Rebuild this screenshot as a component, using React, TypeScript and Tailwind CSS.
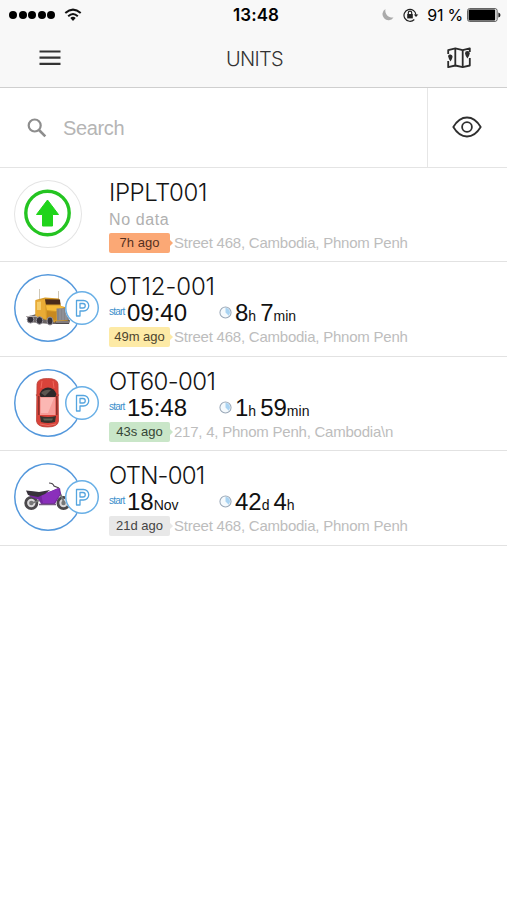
import * as React from 'react';
import clsx from 'clsx';

type Stat = { value: string; unit: string };

type Unit = {
  name: string;
  nameClass: string;
  icon: React.ReactNode;
  parked?: boolean;
  start?: Stat;
  duration?: Stat[];
  ago: string;
  badge: string;
  arrow: string;
  address: string;
};

function ArrowIcon() {
  return (
    <svg viewBox="0 0 68 68" className="h-full w-full">
      <circle cx="33.5" cy="33" r="21.7" fill="#fff" stroke="#24c421" strokeWidth="3.4" />
      <path d="M33.5 20 44.5 34.5H38.5V46H28.5V34.5H22.5Z" fill="#20d41b" stroke="#20d41b" strokeLinejoin="round" />
    </svg>
  );
}

function TruckIcon() {
  return (
    <svg viewBox="0 0 68 68" className="h-full w-full">
      <path d="M13 43 22 40 34 43 56 46 53 50 36 50 14 48Z" fill="#6a6465" />
      <path d="M25.5 15V26M44.5 17V25" stroke="#cfc8b8" strokeWidth="1" />
      <path d="M21.5 26 31 23.5 45 24.5 47 32 55 34 54 47 43 49 21.5 43Z" fill="#d69a28" />
      <path d="M21.5 26.5 31 25 32 45 21.5 42Z" fill="#e9ab35" />
      <path d="M23 28 27 27.5V36L23 36Z" fill="#f6cd6a" />
      <path d="M31 25.2 46 25.5 46.5 30.5 32 30.5Z" fill="#4b2c1a" />
      <path d="M32 31.5 46 31.5 50 34 42 37 33 36Z" fill="#f8bd3a" />
      <path d="M33 37 42 38V46L33 45Z" fill="#c88920" />
      <path d="M42.5 34.5 54.5 34 55 46 43 46.5Z" fill="#85858a" />
      <path d="M46 35V46M49 35V46M52 35V46" stroke="#a0a0a4" strokeWidth=".8" />
      <g fill="#343139" stroke="#96929a" strokeWidth="1">
        <ellipse cx="16.5" cy="45.5" rx="3.3" ry="3.6" />
        <ellipse cx="25.5" cy="46.5" rx="3.3" ry="3.8" />
        <ellipse cx="36" cy="47" rx="3" ry="4" />
      </g>
      <path d="M41 47.5 56 46.5 55 50 42 50Z" fill="#4e494c" />
      <path d="M12 42.5H23M42 48H55" stroke="#b5afb0" strokeWidth="1.2" />
    </svg>
  );
}

function CarIcon() {
  return (
    <svg viewBox="0 0 68 68" className="h-full w-full">
      <path d="M22 26.5 25 25M45 26.5 42 25" stroke="#b56c64" strokeWidth="1.6" />
      <path d="M23 15Q23.5 9.5 33.5 9.5T44 15L44.5 52Q44 58 33.5 58T22.5 52Z" fill="#d9433a" stroke="#b94239" strokeWidth=".8" />
      <path d="M28 12 27 19M39 12 40 19" stroke="#f0675b" strokeWidth="1" />
      <path d="M25.5 25Q28 18.5 34 18.5T42.5 25L41 29H27Z" fill="#2d2829" />
      <path d="M27 24Q31 20 37 21L31 27Z" fill="#5b5650" />
      <path d="M24.8 27V46M42.8 27V46" stroke="#7a2c29" strokeWidth="1.2" />
      <path d="M26 28H41.5V46H26Z" fill="#f69c98" />
      <path d="M27 29H40L34 44H27Z" fill="#fbb7b3" />
      <path d="M26 47Q34 49 42 47L41 53Q34 55 27 53Z" fill="#37322d" />
      <path d="M29 49.5H39L38 51.5H30Z" fill="#5f6354" />
      <path d="M26 55Q34 58 42 55" stroke="#e97167" fill="none" />
    </svg>
  );
}

function MotorbikeIcon() {
  return (
    <svg viewBox="0 0 68 68" className="h-full w-full">
      <g fill="#dad8da" stroke="#4b484b" strokeWidth="2.8">
        <circle cx="17.3" cy="40" r="5.6" />
        <circle cx="49.5" cy="40" r="5.6" />
      </g>
      <g fill="#777">
        <circle cx="17.3" cy="40" r="2.2" />
        <circle cx="49.5" cy="40" r="2.2" />
      </g>
      <path d="M44 26 50 39M18 40 30 36" stroke="#777" strokeWidth="1.8" />
      <path d="M14 31 27 32 42 26 46 25 47 31 41 41 27 41 25 37 17 34Z" fill="#7527a0" />
      <path d="M27 31 38 28 44 25 46 31 40 40 29 40Z" fill="#8a2fbb" />
      <path d="M12 27.5Q20 28 25 29L36 27 31 31 24 34 14 32Z" fill="#38323c" />
      <path d="M35 20Q39 20 40 23L45 25" fill="none" stroke="#4b464c" strokeWidth="1.2" />
      <path d="M25 41.5H42" stroke="#765982" strokeWidth="1.5" />
    </svg>
  );
}

function ClockIcon() {
  return (
    <svg viewBox="0 0 14 14" className="h-[13px] w-[13px]">
      <circle cx="7" cy="7" r="6" fill="#f5fafd" stroke="#9aa8b8" strokeWidth="1.1" />
      <path d="M7 7V2A5 5 0 0 1 10.5 10.5Z" fill="#a9d3f2" />
    </svg>
  );
}

const units: Unit[] = [
  {
    name: 'IPPLT001',
    nameClass: 'tracking-[-0.4px]',
    icon: <ArrowIcon />,
    ago: '7h ago',
    badge: 'bg-[#fba875] text-[#55301f]',
    arrow: 'border-l-[#fba875]',
    address: 'Street 468, Cambodia, Phnom Penh',
  },
  {
    name: 'OT12-001',
    nameClass: 'tracking-[-0.1px]',
    icon: <TruckIcon />,
    parked: true,
    start: { value: '09:40', unit: '' },
    duration: [{ value: '8', unit: 'h' }, { value: '7', unit: 'min' }],
    ago: '49m ago',
    badge: 'bg-[#fdeaa6] text-[#4d452e]',
    arrow: 'border-l-[#fdeaa6]',
    address: 'Street 468, Cambodia, Phnom Penh',
  },
  {
    name: 'OT60-001',
    nameClass: 'tracking-[-0.6px]',
    icon: <CarIcon />,
    parked: true,
    start: { value: '15:48', unit: '' },
    duration: [{ value: '1', unit: 'h' }, { value: '59', unit: 'min' }],
    ago: '43s ago',
    badge: 'bg-[#c9e6c8] text-[#354535]',
    arrow: 'border-l-[#c9e6c8]',
    address: '217, 4, Phnom Penh, Cambodia\\n',
  },
  {
    name: 'OTN-001',
    nameClass: 'tracking-[-0.75px]',
    icon: <MotorbikeIcon />,
    parked: true,
    start: { value: '18', unit: 'Nov' },
    duration: [{ value: '42', unit: 'd' }, { value: '4', unit: 'h' }],
    ago: '21d ago',
    badge: 'bg-[#e8e8e8] text-[#444]',
    arrow: 'border-l-[#e8e8e8]',
    address: 'Street 468, Cambodia, Phnom Penh',
  },
];

function StatusBar() {
  return (
    <div className="grid h-[30px] grid-cols-3 items-center pl-[9px] pr-[6px] text-black">
      <div className="flex items-center">
        <div className="flex gap-[1.5px]">
          {[0, 1, 2, 3, 4].map((i) => (
            <span key={i} className="h-2 w-2 rounded-full bg-black" />
          ))}
        </div>
        <svg viewBox="0 0 18 14" className="ml-[9px] h-[14px] w-[18px]" fill="none" stroke="#111" strokeWidth="2">
          <path d="M1.3 5Q9-1.8 16.7 5M4.2 8.2Q9 3.8 13.8 8.2" />
          <path d="M6.3 10.1Q9 7.5 11.7 10.1L9 13Z" fill="#111" stroke="none" />
        </svg>
      </div>
      <div className="pl-[2px] text-center text-[17px] font-semibold leading-[30px] tracking-[0.1px] font-[Inter,sans-serif]">13:48</div>
      <div className="flex items-center justify-end">
        <svg viewBox="0 0 14 14" className="mr-[8px] h-[14px] w-[14px] shrink-0">
          <path d="M4.5 1A6 6 0 1 0 12.5 9.5A7 7 0 0 1 4.5 1Z" fill="#aaa" />
        </svg>
        <svg viewBox="0 0 16 14" className="mr-[8px] h-[14px] w-[16px] shrink-0" fill="none" stroke="#222" strokeWidth="1.2">
          <path d="M11.3 11.5A6 6 0 1 1 13 7" />
          <path d="M10.8 6.4H15.3L13 9Z" fill="#222" stroke="none" />
          <rect x="4.2" y="6" width="5.6" height="4.4" fill="#222" stroke="none" />
          <path d="M5.3 6V4.8A1.7 1.7 0 0 1 8.7 4.8V6" />
        </svg>
        <span className="shrink-0 whitespace-nowrap text-[16px] leading-[30px] tracking-[-0.2px] font-[Inter,sans-serif]">91 %</span>
        <svg viewBox="0 0 34 14" className="ml-[4px] h-[14px] w-[34px] shrink-0">
          <rect x=".6" y=".6" width="29.5" height="12.8" rx="2" fill="#fff" stroke="#555" />
          <rect x="1.6" y="1.6" width="26.6" height="10.8" rx="1" fill="#000" />
          <path d="M31.4 4.5Q33.5 5 33.5 7T31.4 9.5Z" fill="#222" />
        </svg>
      </div>
    </div>
  );
}

function NavBar() {
  return (
    <div className="grid h-[57px] grid-cols-3 items-center">
      <svg viewBox="0 0 22 16" className="ml-[39px] mt-[-2px] h-4 w-[22px]" stroke="#333" strokeWidth="2.2">
        <path d="M.5 1.5H21.5M.5 7.7H21.5M.5 13.9H21.5" />
      </svg>
      <div className="pl-[2px] text-center text-[20px] font-light leading-[56px] tracking-[-0.7px] text-[#333] font-[Inter,sans-serif]">
        UNITS
      </div>
      <svg viewBox="0 0 24 22" className="mr-9 mt-[-2px] h-[22px] w-6 justify-self-end" fill="none" stroke="#2b2b2b" strokeWidth="1.8" strokeLinejoin="round">
        <path d="M1.2 7V3.2L8.3 1.3 15.7 3.2 22.8 1.3V5M1.2 14V20.2L8.3 18.5 15.7 20.2 22.8 18.5V11" />
        <path d="M8.3 1.5V18.5M15.7 3V20" />
        <path d="M1 9A2.4 2.4 0 0 1 5.6 9.8Q5.4 11.5 3.6 14.5 1.6 12 1 9ZM18 6.5A2.4 2.4 0 0 1 22.8 6.5Q22.5 8.5 20.4 11.5 18.3 8.5 18 6.5Z" fill="#2b2b2b" stroke="none" />
      </svg>
    </div>
  );
}

function SearchBar() {
  return (
    <div className="flex h-[80px] border-b border-[#e4e4e4]">
      <div className="flex flex-1 items-center pl-[27px]">
        <svg viewBox="0 0 20 20" className="h-5 w-5" fill="none" stroke="#8d8d8d" strokeWidth="2.2">
          <circle cx="7.7" cy="7.5" r="6" />
          <path d="M12 12 18.3 18.3" strokeWidth="2.6" />
        </svg>
        <span className="ml-4 mt-px text-[20px] tracking-[-0.35px] text-[#b5b5b5]">Search</span>
      </div>
      <div className="flex w-[80px] items-center justify-center border-l border-[#e6e6e6] pb-[2px] pr-[2px]">
        <svg viewBox="0 0 30 22" className="h-[22px] w-[30px]" fill="none" stroke="#2f2f2f" strokeWidth="1.8">
          <path d="M1.3 11Q7 1.5 15 1.5T28.7 11Q23 20.5 15 20.5T1.3 11Z" strokeLinejoin="round" />
          <circle cx="15" cy="11" r="4.9" />
        </svg>
      </div>
    </div>
  );
}

function UnitAvatar({ unit }: { unit: Unit }) {
  return (
    <div className="relative ml-[14px] mt-3 h-[68px] w-[68px] shrink-0">
      <div
        className={clsx(
          'h-full w-full rounded-full',
          unit.parked ? 'shadow-[inset_0_0_0_1.5px_#5498dc]' : 'shadow-[inset_0_0_0_1px_#e4e4e4]'
        )}
      >
        {unit.icon}
      </div>
      {unit.parked && (
        <div className="absolute left-[51px] top-[17px] h-[34px] w-[34px] rounded-full bg-white shadow-[inset_0_0_0_1.5px_#68afe6]">
          <svg viewBox="0 0 34 34" className="h-full w-full" fill="none" stroke="#55a5df" strokeWidth="1.3" strokeLinejoin="round">
            <path d="M11.5 9.5H18.5A5.2 5.2 0 0 1 18.5 20H15V25H11.5Z" />
            <path d="M15 12.5H18A2.2 2.2 0 0 1 18 17H15Z" />
          </svg>
        </div>
      )}
    </div>
  );
}

function UnitRow({ unit }: { unit: Unit }) {
  return (
    <div className="flex h-[94.4px] border-b border-[#e2e2e2]">
      <UnitAvatar unit={unit} />
      <div className="ml-[27px] pt-[11px]">
        <div className={clsx('h-7 text-[24px] font-light leading-7 text-[#151515] font-[Inter,sans-serif]', unit.nameClass)}>
          {unit.name}
        </div>
        {unit.start ? (
          <div className="flex h-[26px]">
            <div className="flex w-[110px]">
              <span className="w-[18px] text-[10px] leading-[22px] tracking-[-0.8px] text-[#3b8fcb]">start</span>
              <span className="text-[24px] leading-6 text-[#111]">
                {unit.start.value}
                <span className="text-[14px]">{unit.start.unit}</span>
              </span>
            </div>
            <div className="pt-[5px]">
              <ClockIcon />
            </div>
            <div className="ml-[3px] flex gap-[4px] text-[24px] leading-6 text-[#111]">
              {unit.duration?.map((d) => (
                <span key={d.unit}>
                  {d.value}
                  <span className="text-[14px]">{d.unit}</span>
                </span>
              ))}
            </div>
          </div>
        ) : (
          <div className="h-[26px] text-[16px] leading-[25px] tracking-[0.6px] text-[#b0b0b0]">No data</div>
        )}
        <div className="flex h-5 items-center">
          <span className={clsx('h-5 w-[61px] rounded-[2px] text-center text-[13px] leading-[19px]', unit.badge)}>{unit.ago}</span>
          <span className={clsx('mr-px h-0 w-0 border-y-[3px] border-l-[3px] border-y-transparent', unit.arrow)} />
          <span className="whitespace-nowrap text-[15px] leading-5 tracking-[-0.23px] text-[#bdbdbd]">{unit.address}</span>
        </div>
      </div>
    </div>
  );
}

export default function App() {
  return (
    <div className="h-[900px] w-[507px] overflow-hidden bg-white font-['Liberation_Sans',Arial,sans-serif]">
      <header className="h-[88px] border-b border-[#cfcfcf] bg-[#f8f8f8]">
        <StatusBar />
        <NavBar />
      </header>
      <SearchBar />
      {units.map((unit) => (
        <UnitRow key={unit.name} unit={unit} />
      ))}
    </div>
  );
}
